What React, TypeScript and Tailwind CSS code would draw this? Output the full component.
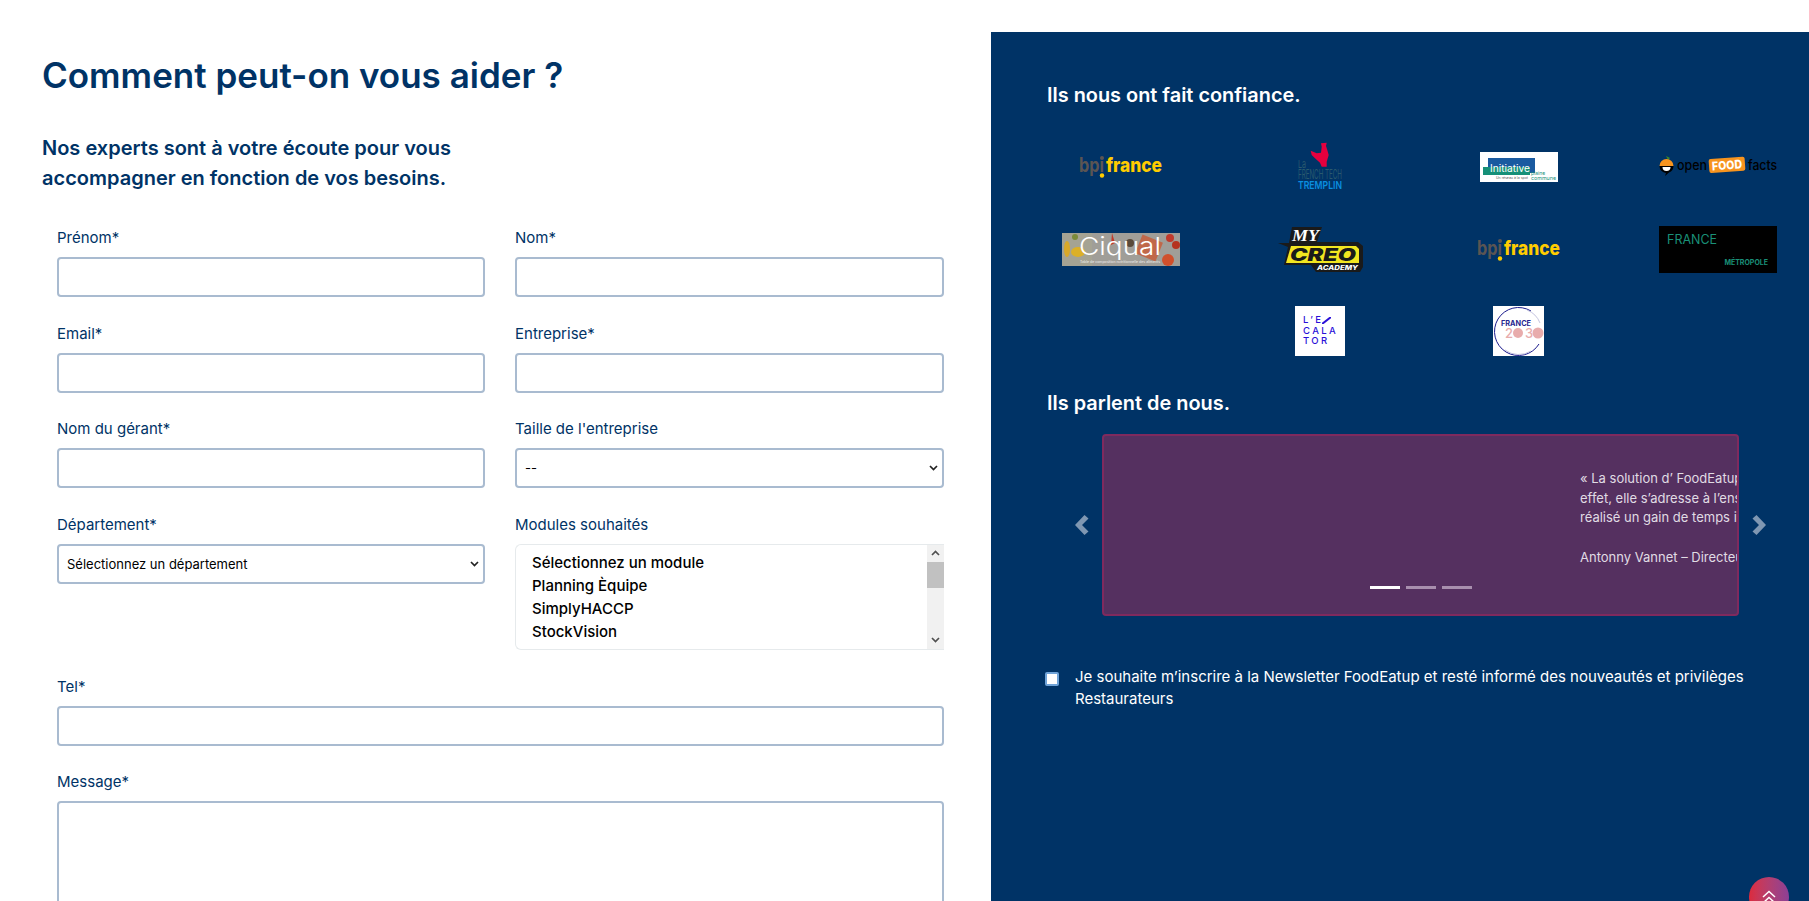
const navy = "text-[#003366]";

function Field({ label, children, className = "" }: { label: string; children: React.ReactNode; className?: string }) {
  return (
    <div className={className}>
      <label className={`mb-[9px] block text-[15px] leading-[20px] ${navy}`}>{label}</label>
      {children}
    </div>
  );
}

const boxClass = "block h-[40px] w-full rounded-[4px] border-2 border-[#a9bbd0] bg-white";

function SmallChevron({ up = false, color = "#222" }: { up?: boolean; color?: string }) {
  return (
    <svg width="9" height="6" viewBox="0 0 9 6" fill="none" stroke={color} strokeWidth="1.7" className={up ? "rotate-180" : ""}>
      <path d="M1 1 L4.5 4.5 L8 1" />
    </svg>
  );
}

function Select({ text }: { text: string }) {
  return (
    <div className="relative">
      <select className={`${boxClass} appearance-none pl-[8px] pt-[2px] text-[13px] text-black`}>
        <option>{text}</option>
      </select>
      <span className="pointer-events-none absolute right-[6px] top-[17px] flex">
        <SmallChevron />
      </span>
    </div>
  );
}

function ModuleList() {
  return (
    <div className="flex h-[106px] overflow-hidden rounded-l-[6px] border border-r-0 border-[#e6eaec] bg-white">
      <ul className="flex-1 pl-[16px] pt-[6px] text-[15px] font-medium leading-[23px] text-black">
        <li>Sélectionnez un module</li>
        <li>Planning Èquipe</li>
        <li>SimplyHACCP</li>
        <li>StockVision</li>
        <li className="mt-[1px]">Mercuriale</li>
      </ul>
      <div className="flex w-[17px] flex-col items-center justify-between bg-[#f1f1f1]">
        <div className="flex w-full flex-col items-center">
          <span className="flex h-[17px] items-center">
            <SmallChevron up color="#505050" />
          </span>
          <div className="h-[26px] w-full bg-[#c1c1c1]" />
        </div>
        <span className="flex h-[17px] items-center">
          <SmallChevron color="#505050" />
        </span>
      </div>
    </div>
  );
}

function BpiLogo() {
  return (
    <svg width="84" height="26" viewBox="0 0 84 26">
      <text x="0" y="19" fontSize="20" fontWeight="700" fill="#5b5553" textLength="25" lengthAdjust="spacingAndGlyphs">bpı</text>
      <circle cx="23" cy="5" r="2" fill="#5b5553" />
      <text x="27" y="19" fontSize="20" fontWeight="800" fill="#ffcc00" textLength="56" lengthAdjust="spacingAndGlyphs">france</text>
      <circle cx="23" cy="22.5" r="2.2" fill="#ffcc00" />
    </svg>
  );
}

function FrenchTechLogo() {
  return (
    <svg width="50" height="50" viewBox="0 0 50 50">
      <path d="M15.7 9.7 L21.7 12.3 L26 11.7 L26.7 5.7 L26 2.3 L31.7 1.7 L31 5 L32.3 9 L33.7 14 L31.7 20.7 L31.7 25.7 L26.7 25.7 L25 21.7 L20 17.3 L16.7 14 Z" fill="#e6003e" />
      <text x="3" y="27" fontSize="11" fill="#2a5a6e" textLength="8" lengthAdjust="spacingAndGlyphs">La</text>
      <text x="3" y="38" fontSize="12.5" fill="#2a5a6e" textLength="44" lengthAdjust="spacingAndGlyphs">FRENCH TECH</text>
      <text x="3" y="48" fontSize="11" fontWeight="600" fill="#0a8fe0" textLength="44" lengthAdjust="spacingAndGlyphs">TREMPLIN</text>
    </svg>
  );
}

function InitiativeLogo() {
  return (
    <svg width="78" height="30" viewBox="0 0 78 30" className="mt-[2px]">
      <rect width="78" height="30" fill="#fff" />
      <rect x="8" y="6" width="47" height="15" fill="#1a5aa0" />
      <rect x="3" y="15" width="47" height="8" fill="#169078" />
      <text x="10" y="20" fontSize="10" fill="#fff" textLength="40" lengthAdjust="spacingAndGlyphs">Initiative</text>
      <text x="51" y="23" fontSize="5" fill="#169078">plaine</text>
      <text x="51" y="27.5" fontSize="5" fill="#169078" textLength="25" lengthAdjust="spacingAndGlyphs">commune</text>
      <text x="16" y="27" fontSize="3.5" fill="#555">Un réseau à la spot</text>
    </svg>
  );
}

function OpenFoodLogo() {
  return (
    <svg width="118" height="22" viewBox="0 0 118 22">
      <path d="M7 1 L11 3 L9 5 Z" fill="#3a8a2a" />
      <path d="M0.5 11 A7 7 0 0 1 14.5 11 Z" fill="#f7941e" />
      <path d="M0.5 11 A7 7 0 0 0 7 18 L6 21 L10 17.5 A7 7 0 0 0 14.5 11 Z" fill="#000" />
      <path d="M3.5 12 H11.5 A4 4 0 0 1 3.5 12 Z" fill="#fff" />
      <text x="18" y="15" fontSize="14" fontWeight="500" fill="#000" textLength="30" lengthAdjust="spacingAndGlyphs">open</text>
      <g transform="rotate(-4 66 10)">
        <rect x="50" y="3" width="36" height="14" rx="2" fill="#f7941e" />
        <text x="53" y="14.5" fontSize="12" fontWeight="800" fill="#fff" textLength="30" lengthAdjust="spacingAndGlyphs">FOOD</text>
      </g>
      <text x="89" y="15" fontSize="14" fontWeight="500" fill="#000" textLength="29" lengthAdjust="spacingAndGlyphs">facts</text>
    </svg>
  );
}

function CiqualLogo() {
  return (
    <svg width="118" height="33" viewBox="0 0 118 33" className="mt-[2px]">
      <rect width="118" height="33" fill="#a09e98" />
      <rect x="0" y="0" width="30" height="33" fill="#a5a393" />
      <ellipse cx="16" cy="19" rx="7" ry="5" fill="#dcb028" />
      <ellipse cx="5" cy="16" rx="3" ry="8" fill="#d8a828" />
      <circle cx="13" cy="4" r="3" fill="#7a8a3a" />
      <rect x="76" y="5" width="22" height="20" fill="#c0684a" transform="rotate(22 87 15)" />
      <circle cx="68" cy="10" r="4" fill="#5a4a3a" />
      <circle cx="108" cy="5" r="4" fill="#c0392b" />
      <circle cx="114" cy="12" r="4" fill="#b5331f" />
      <circle cx="106" cy="27" r="6" fill="#d0502c" />
      <path d="M50 0 L53 10 L49 12 Z" fill="#c03a2a" />
      <text x="17" y="22" fontSize="24" fontWeight="300" fill="#fff" textLength="82" lengthAdjust="spacingAndGlyphs">Ciqual</text>
      <text x="18" y="30" fontSize="3.6" fill="#eee" textLength="80" lengthAdjust="spacingAndGlyphs">Table de composition nutritionnelle des aliments</text>
    </svg>
  );
}

function MyCreoLogo() {
  return (
    <svg width="85" height="45" viewBox="0 0 85 45" className="mt-[2px]">
      <path d="M14 0 H44 L39 15 H80 L85 19 V40 L82 45 H38 L33 38 H6 L10 20 L0 16 H11 Z" fill="#1a1a1a" />
      <path d="M13 19 H78 L81 22 V36 H8 Z" fill="#f2e620" />
      <text x="14" y="14" fontSize="16" fontWeight="700" fontStyle="italic" fontFamily="'Liberation Serif', serif" fill="#fff" textLength="27" lengthAdjust="spacingAndGlyphs">MY</text>
      <text x="12" y="34" fontSize="17" fontWeight="900" fontStyle="italic" fill="#1a1a1a" textLength="66" lengthAdjust="spacingAndGlyphs">CREO</text>
      <text x="39" y="43" fontSize="6" fontWeight="800" fontStyle="italic" fill="#fff" textLength="41" lengthAdjust="spacingAndGlyphs">ACADEMY</text>
    </svg>
  );
}

function MetropoleLogo() {
  return (
    <div className="mt-[2px] flex h-[47px] w-[118px] flex-col justify-between bg-black pb-[6px] pl-[8px] pr-[9px] pt-[7px] text-[#1a9078]">
      <span className="text-[12.5px] leading-[14px]">FRANCE</span>
      <span className="self-end text-[7px] font-bold leading-[8px]">MÉTROPOLE</span>
    </div>
  );
}

function EscalatorLogo() {
  return (
    <div className="flex h-[50px] w-[50px] flex-col items-start justify-center bg-white pl-[8px] text-[9.5px] font-medium leading-[10.5px] tracking-[2.4px] text-[#2a10d8]">
      <span className="flex items-center">
        L’E
        <svg width="9" height="7" viewBox="0 0 9 7" className="-ml-[1px]">
          <path d="M0 7 L9 0" stroke="#2a10d8" strokeWidth="2" />
        </svg>
      </span>
      <span>CALA</span>
      <span>TOR</span>
    </div>
  );
}

function France2030Logo() {
  return (
    <svg width="51" height="50" viewBox="0 0 51 50" className="-ml-[1px]">
      <rect width="51" height="50" fill="#fff" />
      <path d="M38 5 A24 24 0 1 0 46 38" fill="none" stroke="#1a1a8c" strokeWidth="1" />
      <path d="M34 4 A23 23 0 0 1 47 17 M12 44 A23 23 0 0 0 38 45" fill="none" stroke="#b5b5d5" strokeWidth="0.8" />
      <text x="8" y="20" fontSize="7" fontWeight="700" fill="#26268f" textLength="30" lengthAdjust="spacingAndGlyphs">FRANCE</text>
      <text x="12" y="32" fontSize="13" fontWeight="500" fill="#e8acac">2</text>
      <circle cx="25" cy="27" r="5" fill="#e8acac" />
      <text x="32" y="32" fontSize="13" fontWeight="500" fill="#e8acac">3</text>
      <circle cx="45" cy="27" r="5.5" fill="#e8acac" />
    </svg>
  );
}

const logos = [
  <BpiLogo />,
  <FrenchTechLogo />,
  <InitiativeLogo />,
  <OpenFoodLogo />,
  <CiqualLogo />,
  <MyCreoLogo />,
  <BpiLogo />,
  <MetropoleLogo />,
  <EscalatorLogo />,
  <France2030Logo />,
];

function Chevron({ flip = false }: { flip?: boolean }) {
  return (
    <svg width="14" height="20" viewBox="0 0 14 20" className={`shrink-0 ${flip ? "rotate-180" : ""}`}>
      <path d="M9.5 0 L13.5 3.5 L7 10 L13.5 16.5 L9.5 20 L0 10 Z" fill="#7f97b2" />
    </svg>
  );
}

export default function App() {
  return (
    <div className="flex h-screen overflow-hidden bg-white font-['Inter',sans-serif]">
      <div className="w-[991px] shrink-0 pl-[42px] pr-[48px] pt-[50px]">
        <h1 className={`text-[35px] font-semibold leading-[50px] ${navy}`}>Comment peut-on vous aider ?</h1>
        <h2 className={`mt-[33px] w-[480px] text-[20px] font-semibold leading-[30px] ${navy}`}>
          Nos experts sont à votre écoute pour vous accompagner en fonction de vos besoins.
        </h2>

        <form className="ml-[15px] mt-[35px] grid grid-cols-[428px_429px] gap-x-[30px] gap-y-[26.5px]">
          <Field label="Prénom*"><input className={boxClass} /></Field>
          <Field label="Nom*"><input className={boxClass} /></Field>
          <Field label="Email*"><input className={boxClass} /></Field>
          <Field label="Entreprise*"><input className={boxClass} /></Field>
          <Field label="Nom du gérant*"><input className={boxClass} /></Field>
          <Field label="Taille de l'entreprise"><Select text="--" /></Field>
          <Field label="Département*"><Select text="Sélectionnez un département" /></Field>
          <Field label="Modules souhaités"><ModuleList /></Field>
          <Field label="Tel*" className="col-span-2 mt-[0.5px]"><input className={boxClass} /></Field>
          <Field label="Message*" className="col-span-2">
            <textarea className="block h-[200px] w-full rounded-[4px] border-2 border-[#a9bbd0] bg-white" />
          </Field>
        </form>
      </div>

      <div className="relative mt-[32px] flex-1 bg-[#003366] pl-[56px] text-white">
        <h3 className="mt-[49px] text-[19.9px] font-semibold leading-[28px]">Ils nous ont fait confiance.</h3>

        <div className="ml-[15px] mt-[32px] flex w-[715px] flex-wrap justify-center gap-x-[81px] gap-y-[32.5px]">
          {logos.map((logo, i) => (
            <div key={i} className="flex h-[50px] w-[118px] items-center justify-center">
              {logo}
            </div>
          ))}
        </div>

        <h3 className="mt-[33px] text-[19.9px] font-semibold leading-[28px]">Ils parlent de nous.</h3>

        <div className="-ml-[28px] mt-[17px] flex items-center pl-[56px]">
          <Chevron />
          <div className="relative ml-[13px] h-[182px] w-[637px] overflow-hidden rounded-[4px] border-2 border-[#7f2a5e] bg-[#553060]">
            <div className="whitespace-nowrap pl-[476px] pt-[33px] text-[13px] leading-[19.5px] text-[#e0dce4]">
              <p>« La solution d’ FoodEatup</p>
              <p>effet, elle s’adresse à l’ens</p>
              <p>réalisé un gain de temps i</p>
              <p className="mt-[20px]">Antonny Vannet – Directeur</p>
            </div>
            <div className="absolute bottom-[25px] left-[266px] flex gap-[6px]">
              <span className="h-[3px] w-[30px] bg-white" />
              <span className="h-[3px] w-[30px] bg-[#a88fae]" />
              <span className="h-[3px] w-[30px] bg-[#a88fae]" />
            </div>
          </div>
          <span className="ml-[13px]"><Chevron flip /></span>
        </div>

        <div className="-ml-[2px] mt-[50px] flex w-[700px] items-start">
          <input
            type="checkbox"
            className="mt-[6px] h-[14px] w-[14px] shrink-0 appearance-none rounded-[2px] border-2 border-[#6fa3d8] bg-white"
          />
          <p className="ml-[16px] text-[15px] leading-[22px]">
            Je souhaite m’inscrire à la Newsletter FoodEatup et resté informé des nouveautés et privilèges Restaurateurs
          </p>
        </div>

        <button className="absolute bottom-[-16px] right-[20px] flex h-[40px] w-[40px] items-start justify-center rounded-full bg-gradient-to-r from-[#dc2a3c] to-[#8c3f96] pt-[13px]">
          <svg width="16" height="14" viewBox="0 0 16 14" fill="none" stroke="#fff" strokeWidth="1.5">
            <path d="M2 7 L8 1.5 L14 7" />
            <path d="M2 13 L8 7.5 L14 13" />
          </svg>
        </button>
      </div>
    </div>
  );
}
